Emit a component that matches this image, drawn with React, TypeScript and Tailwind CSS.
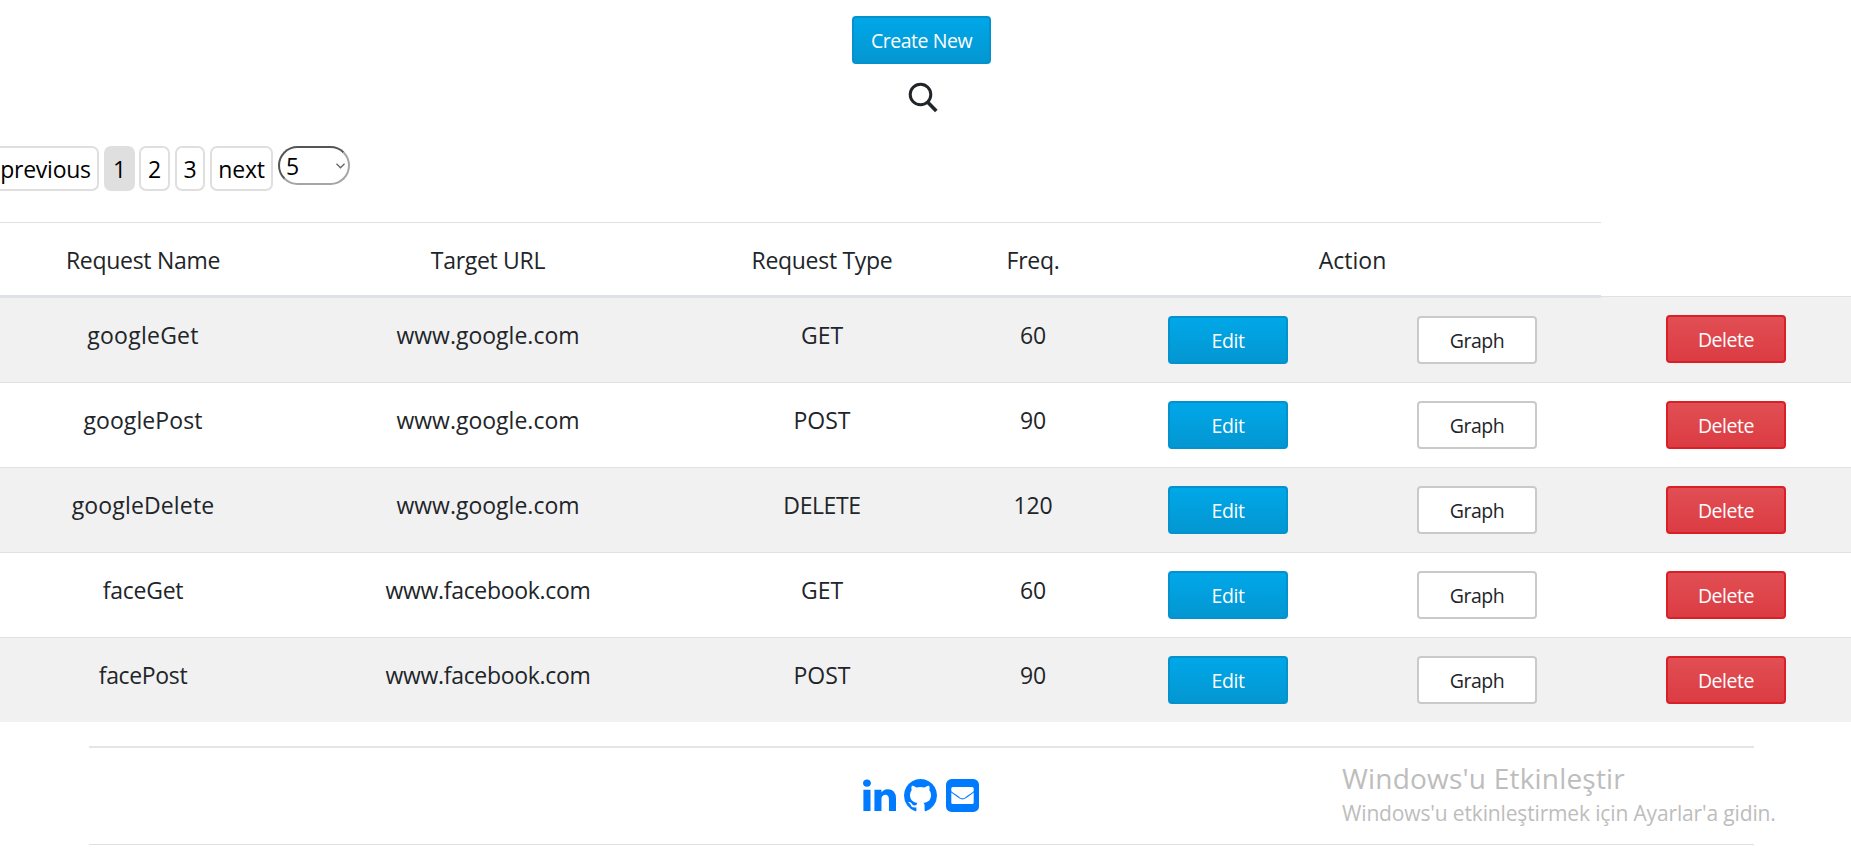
import React from "react";

type Request = { name: string; url: string; type: string; freq: number; nameTracking: string };

const requests: Request[] = [
  { name: "googleGet", url: "www.google.com", type: "GET", freq: 60, nameTracking: "tracking-[0.25px]" },
  { name: "googlePost", url: "www.google.com", type: "POST", freq: 90, nameTracking: "tracking-[0.1px]" },
  { name: "googleDelete", url: "www.google.com", type: "DELETE", freq: 120, nameTracking: "tracking-[0.15px]" },
  { name: "faceGet", url: "www.facebook.com", type: "GET", freq: 60, nameTracking: "tracking-[-0.25px]" },
  { name: "facePost", url: "www.facebook.com", type: "POST", freq: 90, nameTracking: "tracking-[-0.35px]" },
];

const variants = {
  primary:
    "border-[#0492cf] bg-linear-to-b from-[#00a8e9] to-[#0396d1] text-white",
  plain: "border-[#c9cbcb] bg-white text-[#212529]",
  danger: "border-[#da2027] bg-linear-to-b from-[#e14f54] to-[#db3b42] text-white",
};

function Button({
  kind,
  className,
  children,
}: {
  kind: keyof typeof variants;
  className: string;
  children: React.ReactNode;
}) {
  return (
    <button
      className={`flex h-12 items-center justify-center rounded-[4px] border-2 bg-origin-border pt-px text-[19.5px] leading-6 tracking-[-0.45px] ${variants[kind]} ${className}`}
    >
      {children}
    </button>
  );
}

function LinkedinIcon() {
  return (
    <svg className="h-[33px] w-[33px]" viewBox="128 128 1536 1536" fill="currentColor">
      <path d="M477 625v991h-330v-991h330zm21-306q1 73-50.5 122t-135.5 49h-2q-82 0-132-49t-50-122q0-74 51.5-122.5t134.5-48.5 133 48.5 51 122.5zm1166 729v568h-329v-530q0-105-40.5-164.5t-126.5-59.5q-63 0-105.5 34.5t-63.5 85.5q-11 30-11 81v553h-329q2-399 2-647t-1-296l-1-48h329v144h-2q20-32 41-56t56.5-52 87-43.5 114.5-15.5q171 0 275 113.5t104 332.5z" />
    </svg>
  );
}

function GithubIcon() {
  return (
    <svg className="ml-2 h-[33px] w-[33px]" viewBox="128 128 1536 1536" fill="currentColor">
      <path d="M896 128q209 0 385.5 103t279.5 279.5 103 385.5q0 251-146.5 451.5t-378.5 277.5q-27 5-40-7t-13-30q0-3 .5-76.5t.5-134.5q0-97-52-142 57-6 102.5-18t94-39 81-66.5 53-105 20.5-150.5q0-119-79-206 37-91-8-204-28-9-81 11t-92 44l-38 24q-93-26-192-26t-192 26q-16-11-42.5-27t-83.5-38.5-85-13.5q-45 113-8 204-79 87-79 206 0 85 20.5 150t52.5 105 80.5 67 94 39 102.5 18q-39 36-49 103-21 10-45 15t-57 5-65.5-21.5-55.5-62.5q-19-32-48.5-52t-49.5-24l-20-3q-21 0-29 4.5t-5 11.5 9 14 13 12l7 5q22 10 43.5 38t31.5 51l10 23q13 38 44 61.5t67 30 69.5 7 55.5-3.5l23-4q0 38 .5 88.5t.5 54.5q0 18-13 30t-40 7q-232-77-378.5-277.5t-146.5-451.5q0-209 103-385.5t279.5-279.5 385.5-103z" />
    </svg>
  );
}

function MailIcon() {
  return (
    <svg className="ml-[9px] h-[33px] w-[33px]" viewBox="0 0 33 33" fill="none">
      <rect width="33" height="33" rx="5.6" fill="currentColor" />
      <rect x="5.3" y="8" width="22.4" height="17" rx="1.6" fill="#fff" />
      <path
        d="M4.6 12.4C8 15 11 17 13.6 18.9 15.6 20.2 17.4 20.2 19.4 18.9 22 17 25 15 28.4 12.4"
        stroke="currentColor"
        strokeWidth="1.1"
      />
    </svg>
  );
}

const pageButton =
  "h-[45px] rounded-[7px] border-2 border-[#dfdfdf] pt-px text-center text-[23px] leading-[36px] tracking-[-0.25px]";
const columns = "grid grid-cols-[294px_388px_280px_142px_248px_249px_250px]";
const cell = "text-center text-[23px] leading-9";

export default function App() {
  return (
    <div className="flex h-[867px] w-[1851px] flex-col overflow-hidden bg-white font-['Open_Sans','Noto_Sans',sans-serif] text-[#212529]">
      <div className="flex flex-col items-center pr-[8px] pt-4">
        <Button kind="primary" className="w-[139px]">Create New</Button>
        <svg className="mt-[17px] -mr-[3px] h-8 w-8" viewBox="0 0 32 32" fill="none" stroke="#212529">
          <circle cx="13.5" cy="13.5" r="10.3" strokeWidth="3" />
          <path d="M21 21.5 29.3 30" strokeWidth="3.6" />
        </svg>
      </div>

      <div className="mt-[33px] flex h-[76px] shrink-0 items-start text-black">
        <button className={`${pageButton} -ml-2 mr-[5px] w-[107px]`}>previous</button>
        <button className={`${pageButton} mr-1 w-[31px] bg-[#dfdfdf]`}>1</button>
        <button className={`${pageButton} mr-[5px] w-[31px]`}>2</button>
        <button className={`${pageButton} mr-[5px] w-[30px]`}>3</button>
        <button className={`${pageButton} mr-[5px] w-[63px]`}>next</button>
        <button className="flex h-[39px] w-[72px] items-center justify-between rounded-full border-2 border-b-[#a5a5a5] border-l-[#555] border-r-[#a5a5a5] border-t-[#555] pl-[6px] pr-[3px] text-[23px] leading-none">
          <span className="pt-px">5</span>
          <svg className="h-[6px] w-[9px]" viewBox="0 0 9 6" fill="none" stroke="#666" strokeWidth="1.3">
            <path d="M.5.8 4.5 4.8 8.5.8" />
          </svg>
        </button>
      </div>

      <div className="flex h-[76px] shrink-0">
        <div className="flex w-[1601px] border-b-[3px] border-t border-b-[#dee2e6] border-t-[#dee2e6] pt-[19px] tracking-[-0.3px]">
          <div className={`${cell} w-[294px] pr-2`}>Request Name</div>
          <div className={`${cell} w-[388px]`}>Target URL</div>
          <div className={`${cell} w-[280px]`}>Request Type</div>
          <div className={`${cell} w-[142px]`}>Freq.</div>
          <div className={`${cell} w-[497px] tracking-normal`}>Action</div>
        </div>
        <div className="mt-auto h-0.5 w-[250px] border-t border-[#dee2e6] bg-[#f1f1f1]" />
      </div>

      {requests.map((r, i) => (
        <div
          key={r.name}
          className={`${columns} shrink-0 ${i === 0 ? "h-[84px]" : "h-[85px] border-t border-[#dee2e6]"} ${i % 2 ? "bg-white" : "bg-[#f1f1f1]"}`}
        >
          <div className={`${cell} pr-2 pt-[19px] ${r.nameTracking}`}>{r.name}</div>
          <div className={`${cell} pt-[19px] ${r.url === "www.facebook.com" ? "tracking-[-0.3px]" : ""}`}>{r.url}</div>
          <div className={`${cell} pt-[19px] ${r.type === "DELETE" ? "tracking-[-0.4px]" : ""}`}>{r.type}</div>
          <div className={`${cell} pt-[19px] tracking-[-0.2px]`}>{r.freq}</div>
          <div className="flex justify-center pt-[18px]">
            <Button kind="primary" className="w-[120px]">Edit</Button>
          </div>
          <div className="flex justify-center pl-px pt-[18px]">
            <Button kind="plain" className="w-[120px]">Graph</Button>
          </div>
          <div className={`flex justify-center ${i === 0 ? "pt-[17px]" : "pt-[18px]"}`}>
            <Button kind="danger" className="w-[120px]">Delete</Button>
          </div>
        </div>
      ))}

      <footer className="relative ml-[89px] mt-6 flex h-[99px] w-[1665px] shrink-0 border-b border-t-2 border-b-[#dfdfdf] border-t-[#e5e5e5] pl-[774px] pt-[31px] text-[#007bff]">
        <LinkedinIcon />
        <GithubIcon />
        <MailIcon />
        <div className="absolute left-[1253px] top-[10px] whitespace-nowrap text-[#bdbdbd]">
          <div className="text-[28px] leading-10 tracking-[0.2px]">Windows'u Etkinleştir</div>
          <div className="pt-px text-[21px] leading-7 tracking-[-0.15px]">Windows'u etkinleştirmek için Ayarlar'a gidin.</div>
        </div>
      </footer>
    </div>
  );
}
